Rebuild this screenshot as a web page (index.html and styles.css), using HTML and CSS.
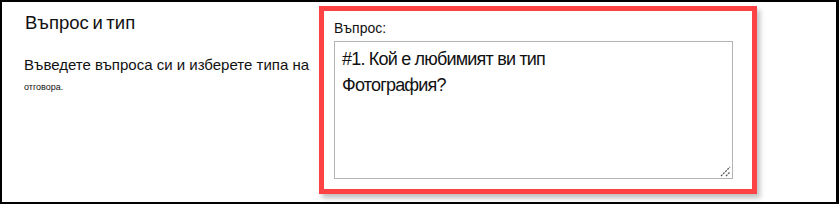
FILE: index.html
```html
<!DOCTYPE html>
<html lang="bg">
<head>
    <meta charset="UTF-8">
    <title>Въпрос и тип</title>
    <link rel="stylesheet" href="styles.css">
</head>
<body>
    <div class="frame">
        <div class="intro">
            <h2 class="title">Въпрос и тип</h2>
            <p class="hint">Въведете въпроса си и изберете типа на</p>
            <p class="hint-small">отговора.</p>
        </div>
        <div class="highlight">
            <label class="label" for="question">Въпрос:</label>
            <div class="field">
                <div class="textbox" id="question">#1. Кой е любимият ви тип<br>Фотография?</div>
                <svg class="grip" width="12" height="12" viewBox="0 0 12 12">
                    <path d="M2 11 L11 2 M7 11 L11 7" stroke="#555" stroke-width="1.3" stroke-dasharray="2 1"/>
                </svg>
            </div>
        </div>
    </div>
</body>
</html>
```

FILE: styles.css
```css
html, body {
    margin: 0;
    padding: 0;
}
body {
    font-family: "Liberation Sans", Arial, sans-serif;
    color: #111;
    background: #fff;
}
.frame {
    width: 834px;
    height: 200px;
    border-style: solid;
    border-color: #000;
    border-width: 2px 3px 2px 2px;
    display: flex;
    overflow: hidden;
}
.intro {
    width: 295px;
    padding-left: 22px;
}
.title {
    margin: 10px 0 0 1px;
    font-size: 18.5px;
    font-weight: normal;
    word-spacing: -1.5px;
}
.hint {
    margin: 22px 0 0 0;
    font-size: 15px;
}
.hint-small {
    margin: 9px 0 0 0;
    font-size: 9px;
}
.highlight {
    margin-top: 4px;
    width: 438px;
    height: 188px;
    border: 5px solid #fd4246;
    box-shadow: 3px 4px 5px rgba(0, 0, 0, 0.25);
    padding: 0 0 0 10px;
    box-sizing: border-box;
    display: flex;
    flex-direction: column;
}
.label {
    font-size: 14px;
    margin-top: 9px;
    height: 17px;
}
.field {
    position: relative;
    margin-top: 4px;
    width: 399px;
    height: 138px;
    flex-shrink: 0;
}
.textbox {
    box-sizing: border-box;
    width: 100%;
    height: 100%;
    border: 1px solid #b4b4b4;
    padding: 4px 7px;
    font-size: 18px;
    line-height: 26px;
    letter-spacing: -0.8px;
}
.grip {
    position: absolute;
    right: 2px;
    bottom: 2px;
}
```
